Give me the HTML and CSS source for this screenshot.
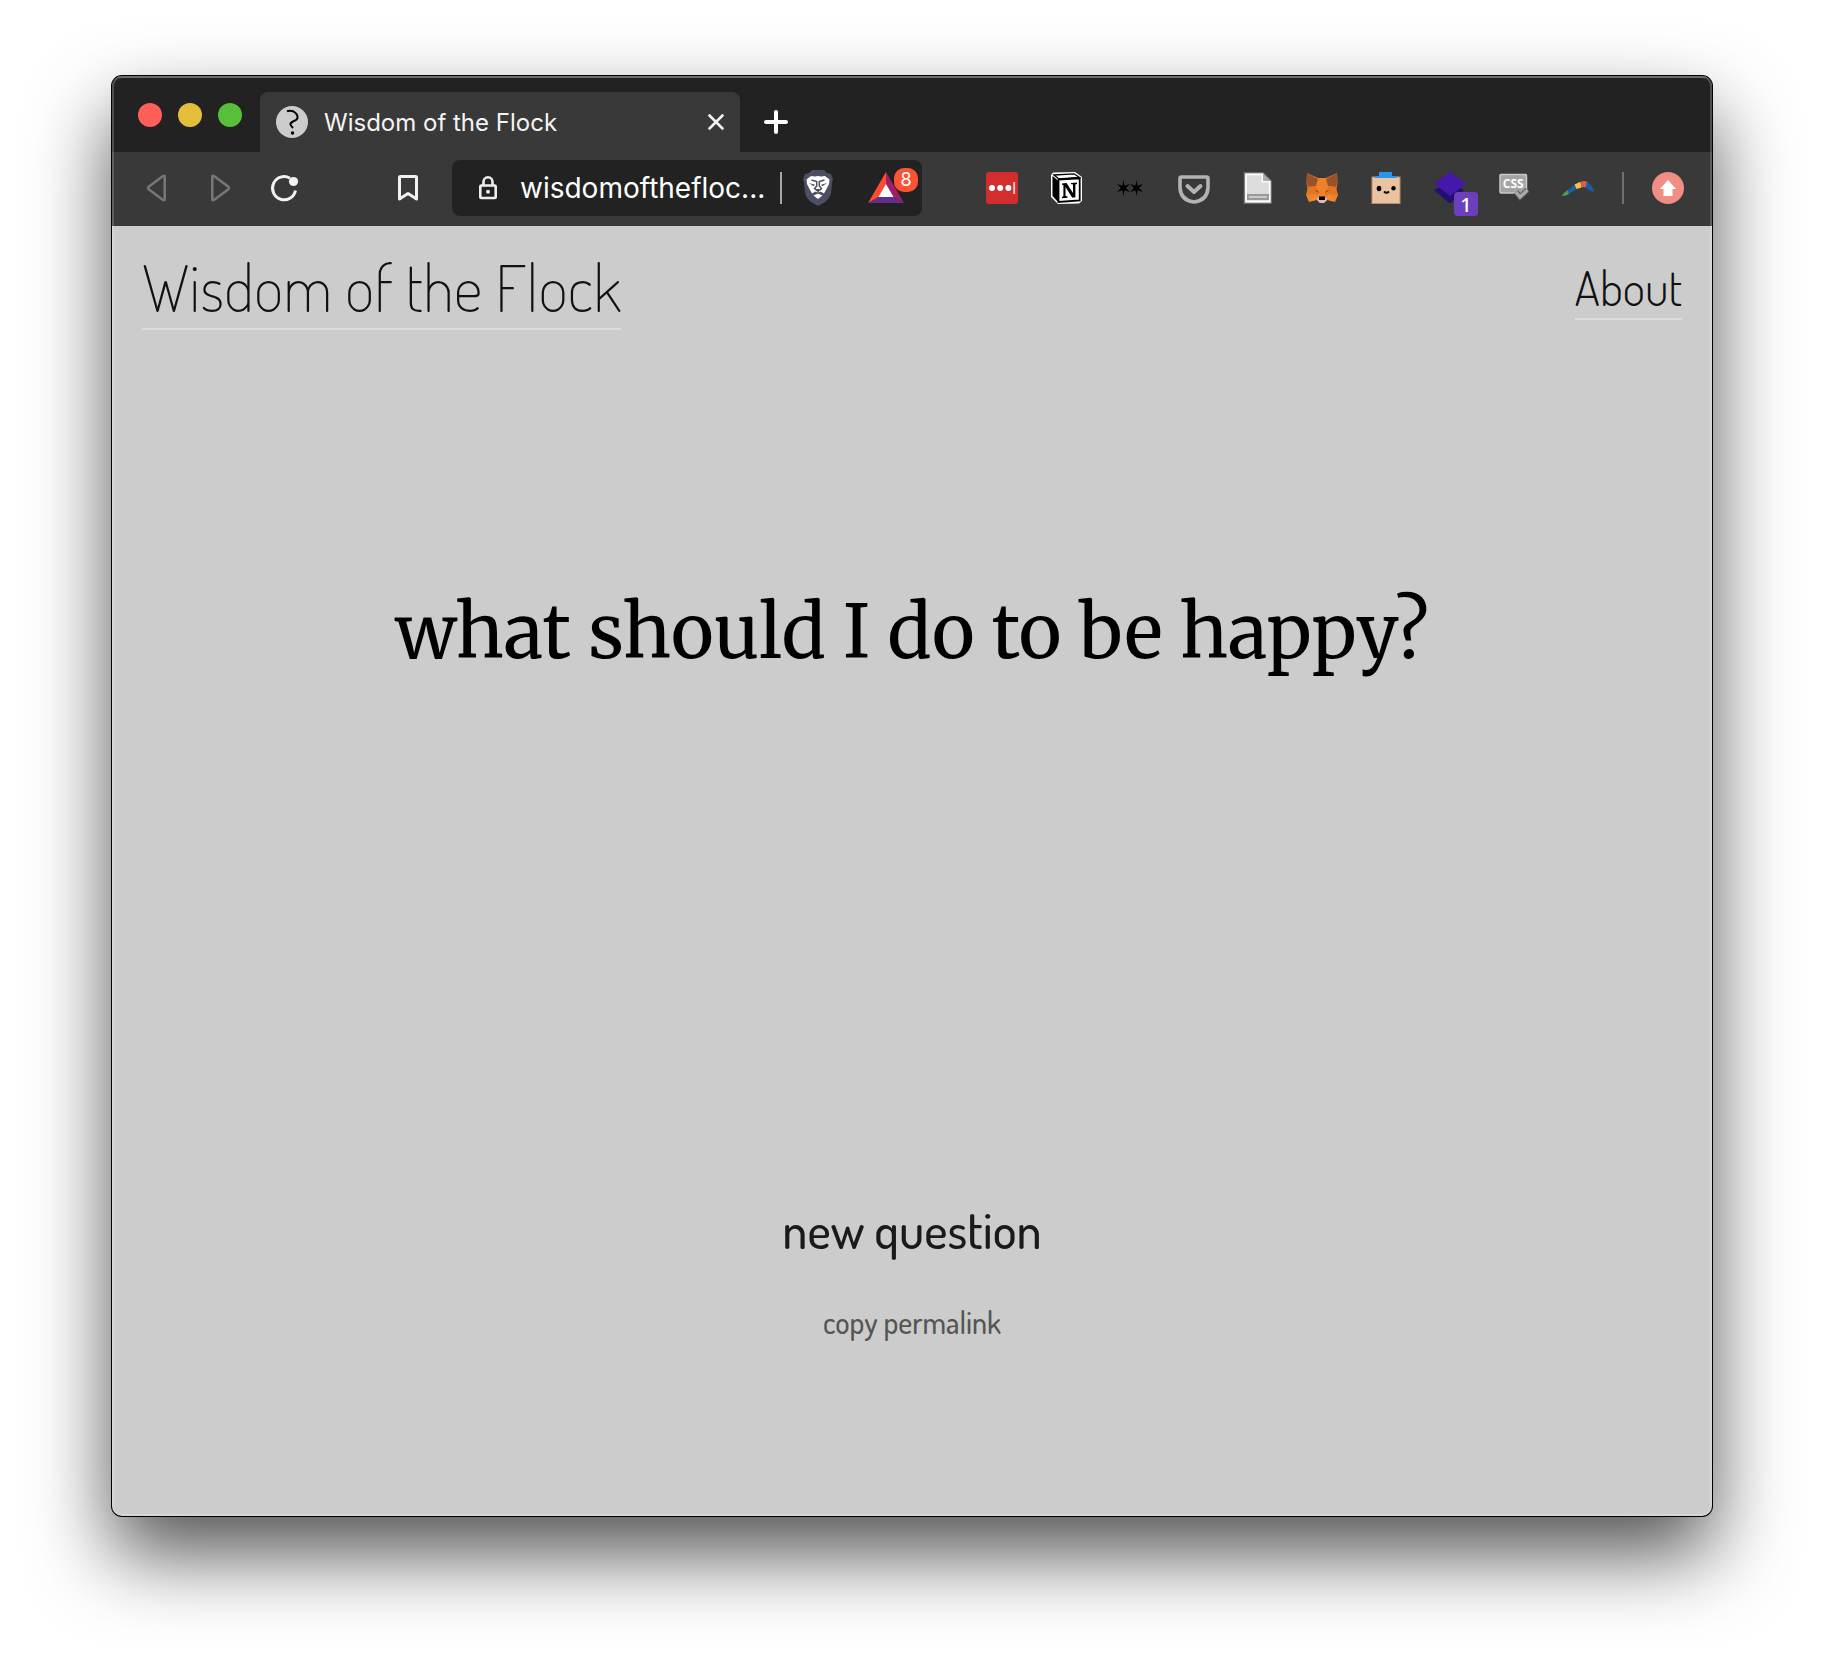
FILE: index.html
```html
<!DOCTYPE html>
<html lang="en">
<head>
<meta charset="utf-8">
<meta name="viewport" content="width=device-width, initial-scale=1">
<title>Wisdom of the Flock</title>
<link rel="stylesheet" href="styles.css">
</head>
<body>
<div class="window">
  <div class="tabbar">
    <div class="lights">
      <button class="light light-close" aria-label="Close window"></button>
      <button class="light light-min" aria-label="Minimize window"></button>
      <button class="light light-max" aria-label="Zoom window"></button>
    </div>
    <div class="tab">
      <svg class="icon" viewBox="0 0 32 32" aria-hidden="true"><circle cx="16" cy="16" r="16" fill="#ccc"/><path d="M11 5.500Q13 4 17 5.200Q22 8 21.500 12Q21 14 17 15.500Q14 17 14.500 18.500Q15 20 17 22" fill="none" stroke="#000" stroke-width="2"/><circle cx="16.500" cy="27" r="1.700"/></svg>
      <span class="tab-title">Wisdom of the Flock</span>
      <button class="tab-close" aria-label="Close tab"><svg class="glyph" viewBox="0 0 16 16"><path d="M1.500 1.500 14.500 14.500M14.500 1.500 1.500 14.500" fill="none" stroke="#f2f2f2" stroke-width="2.600" stroke-linecap="round"/></svg></button>
    </div>
    <button class="tab-new" aria-label="New tab"><svg class="plus" viewBox="0 0 24 24"><path d="M12 2V22M2 12H22" fill="none" stroke="#fff" stroke-width="4" stroke-linecap="round"/></svg></button>
  </div>

  <div class="toolbar">
    <div class="tools">
      <button class="tool" aria-label="Back"><svg class="icon" viewBox="0 0 32 32"><path d="M24.700 5V27Q24.700 29 22.700 27.700L9 17.500Q7 16 9 14.500L22.700 4.300Q24.700 3 24.700 5Z" fill="none" stroke="#767676" stroke-width="2.600"/></svg></button>
      <button class="tool" aria-label="Forward"><svg class="icon" viewBox="0 0 32 32"><path d="M8.300 5V27Q8.300 29 10.300 27.700L24 17.500Q26 16 24 14.500L10.300 4.300Q8.300 3 8.300 5Z" fill="none" stroke="#767676" stroke-width="2.600"/></svg></button>
      <button class="tool" aria-label="Reload"><svg class="icon" viewBox="0 0 32 32"><path d="M22 6.200A11.600 11.600 0 1 0 27.500 18.500" fill="none" stroke="#f2f2f2" stroke-width="3"/><circle cx="25.500" cy="9.500" r="4.600" fill="#f2f2f2"/></svg></button>
    </div>
    <button class="tool bookmark" aria-label="Bookmark"><svg class="icon" viewBox="0 0 32 32"><path d="M7.500 27V5.500Q7.500 4.500 8.500 4.500H23.500Q24.500 4.500 24.500 5.500V27L16 21.500Z" fill="none" stroke="#f2f2f2" stroke-width="3" stroke-linejoin="round"/></svg></button>
    <div class="address">
      <svg class="lock" viewBox="0 0 20 24" aria-hidden="true"><rect x="2.300" y="9.500" width="15.400" height="12.500" rx="1" fill="none" stroke="#eee" stroke-width="2.600"/><path d="M5.500 9V5.800A4.500 4.500 0 0 1 14.500 5.800V9" fill="none" stroke="#eee" stroke-width="2.600"/><circle cx="10" cy="15.700" r="2" fill="#eee"/></svg>
      <input class="url" type="text" aria-label="Address" value="wisdomofthefloc...">
      <span class="divider"></span>
      <button class="shield" aria-label="Brave Shields"><svg viewBox="0 0 30 36" width="30" height="36"><path d="M9 0H21L24 3 28 4 30 9 29 13 28 23Q27 28 22 32L15 36 8 32Q3 28 2 23L1 13 0 9 2 4 6 3Z" fill="#4c4e61"/><path d="M3.500 9.500 8 6 12 6.500 15 6 18 6.500 22 6 26.500 9.500 26 14 24 18 21 23.500 17.500 21.500 15 23 12.500 21.500 9 23.500 6 18 4 14Z" fill="#fff"/><path d="M10.500 25.500 15 23.500 19.500 25.500 15 29Z" fill="#fff"/><path d="M8.500 10 13.700 11.500V16L11.500 18.500 15 21 18.500 18.500 16.300 16V11.500L21.500 10" fill="none" stroke="#4c4e61" stroke-width="1.500"/><path d="M6 13 12 14.800 10.500 16.200ZM24 13 18 14.800 19.500 16.200ZM12.500 19H17.500L15.800 21V23.500H14.200V21Z" fill="#4c4e61"/></svg></button>
      <button class="rewards" aria-label="Brave Rewards"><svg viewBox="0 0 36 32" width="36" height="32"><path d="M18 0V13L11 25 0 31Z" fill="#ff4b2f"/><path d="M18 0 36 31 25 25 18 13Z" fill="#9e1f63"/><path d="M0 31H36L25 25H11Z" fill="#662d91"/><path d="M18 12 25.500 25H10.500Z" fill="#fff"/></svg><span class="count">8</span></button>
    </div>

    <div class="extensions">
      <button class="tool" aria-label="Password manager"><svg class="icon" viewBox="0 0 32 32"><rect width="32" height="32" rx="3" fill="#d32d2d"/><circle cx="6" cy="16" r="3" fill="#fff"/><circle cx="14.200" cy="16" r="3" fill="#fff"/><circle cx="22.400" cy="16" r="3" fill="#fff"/><path d="M28.200 10V22" stroke="#fbc8c8" stroke-width="1.800"/></svg></button>
      <button class="tool" aria-label="Notion"><svg class="icon" viewBox="0 0 32 32"><path d="M3 .5 25 0 32 5V29L29 31.500 8 32 1 25V3Z" fill="#fff"/><path d="M2.500 4 8 8.500V30L2.500 24Z"/><path d="M4 3 24 1.800 29.500 5.500 9 7Z" fill="#fff" stroke="#000" stroke-width="1.300"/><path d="M8.500 7.500 29.700 6.300V28.500L8.500 30Z" fill="#fff" stroke="#000" stroke-width="1.800"/><path d="M12 11.500 16.500 11 23 21V12.500L21 12V11L27 10.600V12L25.400 12.600V25.500H22.100L15.500 15V24L17.500 24.500V25.800L12 26.200V25L13.400 24.300V13L12 12.700Z"/></svg></button>
      <button class="tool" aria-label="Stars"><svg class="icon" viewBox="0 0 32 32"><path id="star" d="M9.500 8 10.600 13.800 16 12 12 16 16 20 10.600 18.200 9.500 24 8.400 18.200 3 20 7 16 3 12 8.400 13.800Z"/><use href="#star" x="13"/></svg></button>
      <button class="tool" aria-label="Pocket"><svg class="icon" viewBox="0 0 32 32"><path d="M3.500 5H28.500Q30 5 30 6.500V16Q29 28.500 16 30 3 28.500 2 16V6.500Q2 5 3.500 5Z" fill="none" stroke="#b3b3b3" stroke-width="3.600"/><path d="M9.500 14 16 20 22.500 14" fill="none" stroke="#b3b3b3" stroke-width="4" stroke-linecap="round" stroke-linejoin="round"/></svg></button>
      <button class="tool" aria-label="Page notes"><svg class="icon" viewBox="0 0 32 32"><path d="M2.500 1H21L29 9V31H2.500Z" fill="#dedede" stroke="#7b7b7b" stroke-width="1.500"/><path d="M4 2.300H20.500V9.500H27.700V29.700H4Z" fill="#dcdcdc" stroke="#fff" stroke-width="1.700"/><path d="M21 2 28 9H21Z" fill="#aaa"/><rect x="5" y="22" width="22" height="6" fill="#999"/><rect x="7" y="24" width="18" height="2" fill="#c8c8c8"/></svg></button>
      <button class="tool" aria-label="MetaMask"><svg class="icon" viewBox="0 0 32 32"><path d="M1 1 12 6H20L31 1 31.500 12 30 18 32 23 29 30 21 28 18 31H14L11 28 3 30 0 23 2 18 .5 12Z" fill="#f0812b"/><path d="M1 1 12 7 10 14 2 15 .5 11ZM31 1 20 7 22 14 30 15 31.500 11Z" fill="#9c5228"/><path d="M2 15 10 14 13 23 9 22 0 23ZM30 15 22 14 19 23 23 22 32 23Z" fill="#e27625"/><path d="M9 22 12 27 4 29ZM23 22 20 27 28 29Z" fill="#ef8b3c"/><path d="M8.500 18 12 19 13 21ZM23.500 18 20 19 19 21Z" fill="#7a3d18"/><path d="M12 25H20L21 28 18 31H14L11 28Z" fill="#d6c0b3"/><path d="M13 24.500H19V28H13Z"/></svg></button>
      <button class="tool" aria-label="Box buddy"><svg class="icon" viewBox="0 0 32 32"><rect x="2" y="5" width="28" height="26.500" fill="#ecc3a0" stroke="#b58f70"/><path d="M9 0H22V4H27V6H5V4H9Z" fill="#2794ee"/><ellipse cx="9" cy="16.500" rx="2.300" ry="2.700"/><circle cx="23.500" cy="16.200" r="2.200"/><path d="M14 19.500Q16.500 22 19 19.500" fill="none" stroke="#000" stroke-width="1.800"/></svg></button>
      <button class="tool tabs-count" aria-label="Saved layers"><svg class="icon" viewBox="0 0 32 32"><path d="M0 18 16 10 30 18 17 31H15Z" fill="#230f70"/><path d="M16 0 32 11.500 16 24 0 11.500Z" fill="#4418aa"/></svg><span class="count-square">1</span></button>
      <button class="tool" aria-label="CSS checker"><svg class="icon" viewBox="0 0 32 32"><rect x="2" y="2.500" width="26.500" height="18.500" rx="1" fill="#a5a5a5" stroke="#c9c9c9" stroke-width="1.500"/><text class="css-label" x="15.200" y="16" text-anchor="middle">CSS</text><path d="M18 20 22 25 29.500 18" fill="none" stroke="#555" stroke-width="5.500"/><path d="M18 20 22 25 29.500 18" fill="none" stroke="#aaa" stroke-width="3.500"/></svg></button>
      <button class="tool" aria-label="Boomerang"><svg class="icon" viewBox="0 0 32 32"><path d="M0 24Q2 20 6 18L7 22Q3 24.500 0 24Z" fill="#43a35b"/><path d="M6 18 12.500 12.500 14.500 17 7 22Z" fill="#175fa8"/><path d="M12.500 12.500 18.500 9.800 19.500 15.500 14.500 17Z" fill="#fbc04c"/><path d="M18.500 9.800Q22 8.500 25 9.500L24 15.500Q22 14.500 19.500 15.500Z" fill="#e35847"/><path d="M25 9.500Q30 13 32 19.500 28.500 20 24 15.500Z" fill="#175fa8"/></svg></button>
    </div>
    <span class="divider divider-dim"></span>
    <button class="tool" aria-label="Update available"><svg class="icon" viewBox="0 0 32 32"><circle cx="16" cy="16" r="16" fill="#f08d85"/><path d="M16 8 24 17H20.500V24H11.500V17H8Z" fill="#fff"/></svg></button>
  </div>

  <div class="page">
    <header class="site-header">
      <a class="site-title" href="#">Wisdom of the Flock</a>
      <a class="about" href="#about">About</a>
    </header>
    <main class="question-area">
      <h1 class="question">what should I do to be happy?</h1>
    </main>
    <footer class="actions">
      <button class="new-question">new question</button>
      <button class="permalink">copy permalink</button>
    </footer>
  </div>
</div>
</body>
</html>
```

FILE: styles.css
```css
* { box-sizing: border-box; }

body {
  margin: 0;
  min-height: 100vh;
  display: flex;
  padding: 76px 112px 148px;
  background: #fff;
  font-family: Inter, "Liberation Sans", sans-serif;
}

button {
  border: 0;
  padding: 0;
  background: none;
  font: inherit;
  color: inherit;
}

svg { display: block; }

.window {
  position: relative;
  flex: 1;
  min-width: 0;
  display: flex;
  flex-direction: column;
  border-radius: 10px;
  overflow: hidden;
  background: #ccc;
  box-shadow: 0 0 0 1px #000, 0 38px 80px rgba(0, 0, 0, .68);
}

/* light rim along the window's inner edge */
.window::after {
  content: "";
  position: absolute;
  inset: 0;
  border-radius: 10px;
  box-shadow: inset 0 0 0 2px rgba(255, 255, 255, .2);
  pointer-events: none;
}

.tabbar {
  display: flex;
  align-items: flex-end;
  height: 76px;
  background: #222;
  border-top: 2px solid #484948;
}

.lights {
  display: flex;
  align-self: flex-start;
  gap: 16px;
  padding: 25px 18px 0 26px;
}

.light { width: 24px; height: 24px; border-radius: 50%; }
.light-close { background: #ff5f57; }
.light-min { background: #e5bf3c; }
.light-max { background: #57c038; }

.tab {
  display: flex;
  align-items: center;
  gap: 16px;
  width: 480px;
  height: 60px;
  padding: 0 16px;
  border-radius: 8px 8px 0 0;
  background: #393939;
  color: #f4f4f4;
  font-size: 24px;
}

.icon { width: 32px; height: 32px; }
.tab-title { flex: 1; white-space: nowrap; }
.glyph { width: 16px; height: 16px; }

.tab-close {
  display: grid;
  place-items: center;
  width: 16px;
  height: 32px;
}

.tab-new {
  display: grid;
  place-items: center;
  width: 72px;
  height: 60px;
}

.plus { width: 24px; height: 24px; }

.toolbar {
  display: flex;
  align-items: center;
  padding: 8px 12px 10px;
  background: #393939;
}

.tools, .extensions { display: flex; }
.extensions { margin-left: auto; }

.tool {
  display: grid;
  place-items: center;
  width: 64px;
  height: 40px;
}

.bookmark { margin: 0 12px 0 60px; }

.address {
  display: flex;
  align-items: center;
  width: 470px;
  height: 56px;
  padding: 0 18px 0 26px;
  border-radius: 8px;
  background: #222;
}

.lock { width: 20px; height: 24px; }

.url {
  flex: 1;
  min-width: 0;
  margin-left: 22px;
  padding: 0;
  border: 0;
  background: none;
  color: #fff;
  font: 28px/40px Inter, "Liberation Sans", sans-serif;
}

.divider { width: 2px; height: 32px; background: #a8a8a8; }
.divider-dim { margin: 0 12px; background: #6f6f6f; }
.shield { margin: 0 35px 0 21px; }
.rewards { position: relative; }

.count {
  position: absolute;
  top: -4px;
  right: -14px;
  width: 24px;
  height: 24px;
  border-radius: 10px;
  background: #fb5434;
  color: #fff;
  font-size: 18px;
  line-height: 24px;
}

.tabs-count { position: relative; }

.count-square {
  position: absolute;
  top: 24px;
  right: 4px;
  width: 24px;
  height: 24px;
  border-radius: 4px;
  background: #6d3fbc;
  color: #fff;
  font: 500 20px/26px "Noto Sans", sans-serif;
}

.css-label { font: bold 12px "Open Sans", sans-serif; fill: #fff; }

.page {
  flex: 1;
  display: flex;
  flex-direction: column;
  color: #111;
  font-family: Dosis, Lato, sans-serif;
}

.site-header {
  display: flex;
  align-items: center;
  justify-content: space-between;
  padding: 30px 30px 0;
}

.site-title, .about {
  padding-bottom: 10px;
  border-bottom: 2px solid #ddd;
  color: #111;
  text-decoration: none;
  white-space: nowrap;
}

.site-title { font-size: 64px; font-weight: 200; line-height: 62px; }
.about { font-size: 48px; font-weight: 300; line-height: 42px; }

.question-area {
  flex: 1;
  display: grid;
  place-items: center;
}

.question {
  margin: 0;
  color: #000;
  font: 400 73px/112px Merriweather, "DejaVu Serif Condensed", "DejaVu Serif", serif;
  text-align: center;
}

.actions {
  display: flex;
  flex-direction: column;
  align-items: center;
  gap: 52px;
  padding: 272px 30px 178px;
}

.new-question { font-size: 50px; font-weight: 500; line-height: 48px; color: #1a1a1a; }
.permalink { font-size: 30px; font-weight: 500; line-height: 32px; color: #555; }
```
